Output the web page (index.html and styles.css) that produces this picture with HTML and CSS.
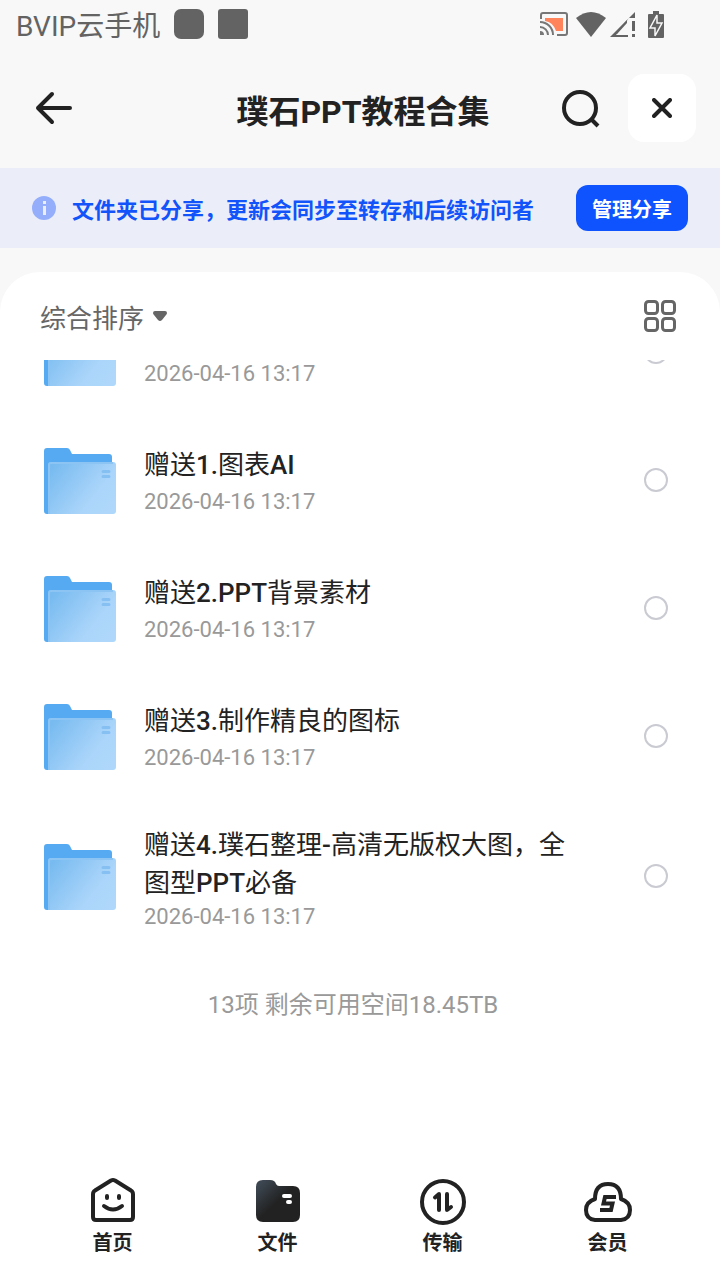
FILE: index.html
```
<!DOCTYPE html>
<html lang="zh-CN">
<head>
    <meta charset="UTF-8">
    <meta name="viewport" content="width=device-width, initial-scale=1.0">
    <title>璞石PPT教程合集</title>
    <link rel="stylesheet" href="styles.css">
</head>
<body>
    <!-- Shared folder icon -->
    <svg class="sprite" width="0" height="0" aria-hidden="true">
        <defs>
            <linearGradient id="folder-front" x1="0" y1="0.2" x2="1" y2="0.8">
                <stop offset="0" stop-color="#78bbf0"/>
                <stop offset="0.7" stop-color="#abd5fa"/>
                <stop offset="1" stop-color="#aed7fb"/>
            </linearGradient>
        </defs>
        <symbol id="folder" viewBox="0 0 72 66">
            <path d="M3 0h20q2 0 3 2l2 4h37q3 0 3 3v50H6v7H3q-3 0-3-3V3q0-3 3-3z" fill="#56aaf1"/>
            <path d="M7 14h62q3 0 3 3v46q0 3-3 3H4V17q0-3 3-3z" fill="url(#folder-front)"/>
            <path d="M5 66V17q0-2 2-2h62" fill="none" stroke="#8cc5f4" stroke-width="2"/>
            <path d="M59 23.500h6M59 28.500h6" stroke="#86c0f2" stroke-width="3" stroke-linecap="round"/>
        </symbol>
    </svg>

    <div class="status-bar">
        <span>BVIP云手机</span>
        <span class="notice-dot round"></span>
        <span class="notice-dot"></span>
        <div class="status-icons">
            <svg width="28" height="24" viewBox="0 0 28 24">
                <path d="M5 6h18v13h-7Q13 10 5 9z" fill="#ff845c"/>
                <path d="M1 7V3q0-2 2-2h22q2 0 2 2v18q0 2-2 2h-8" fill="none" stroke="#777" stroke-width="2"/>
                <path d="M0 10a13 13 0 0 1 13 13M0 15a8 8 0 0 1 8 8" fill="none" stroke="#777" stroke-width="2"/>
                <path d="M0 19a4 4 0 0 1 4 4H0z" fill="#777"/>
            </svg>
            <svg class="wifi" width="30" height="25" viewBox="0 0 30 25">
                <path d="M0 6Q15-6 30 6L15 25z" fill="#636363"/>
            </svg>
            <svg class="signal" width="25" height="25" viewBox="0 0 25 25">
                <path d="M25 0v6h-6L6 23h12v2H0z" fill="#636363"/>
                <path d="M17 8v3L7 22H4z" fill="#636363"/>
                <path d="M22 9h3v10h-3zM22 22h3v3h-3z" fill="#636363"/>
            </svg>
            <svg class="battery" width="16" height="27" viewBox="0 0 16 27">
                <path d="M5 0h6v3h4q1 0 1 1v22q0 1-1 1H1q-1 0-1-1V4q0-1 1-1h4z" fill="#636363"/>
                <path d="M9 4v8h5L7 25v-8H2z" fill="#636363" stroke="#f8f8f8" stroke-width="1.5"/>
            </svg>
        </div>
    </div>

    <header class="header">
        <button type="button" class="back" aria-label="返回">
            <svg width="38" height="34" viewBox="0 0 38 34" fill="none" stroke="#222" stroke-width="4" stroke-linecap="round" stroke-linejoin="round">
                <path d="M18 3L4 17l14 14M4 17h32"/>
            </svg>
        </button>
        <h1>璞石PPT教程合集</h1>
        <div class="header-actions">
            <button type="button" aria-label="搜索">
                <svg width="40" height="40" viewBox="0 0 40 40" fill="none" stroke="#222" stroke-width="4">
                    <circle cx="19" cy="20" r="16"/>
                    <path d="M30 31l7 7"/>
                </svg>
            </button>
            <button type="button" class="close" aria-label="关闭">
                <svg width="20" height="20" viewBox="0 0 20 20" fill="none" stroke="#222" stroke-width="4" stroke-linecap="round">
                    <path d="M2 2l16 16M18 2L2 18"/>
                </svg>
            </button>
        </div>
    </header>

    <div class="share-notice">
        <svg width="24" height="24" viewBox="0 0 24 24">
            <circle cx="12" cy="12" r="12" fill="#94aefc"/>
            <path d="M11 5h3v3h-3zM11 10h3v9h-3z" fill="#ebeef8"/>
        </svg>
        <p>文件夹已分享，更新会同步至转存和后续访问者</p>
        <button type="button">管理分享</button>
    </div>

    <main class="sheet">
        <div class="toolbar">
            <button type="button" class="sort">
                综合排序
                <svg width="14" height="10" viewBox="0 0 14 10">
                    <path d="M2 0h10q2 0 2 2 0 1-1 2L9 9Q7 11 5 9L1 4Q0 3 0 2q0-2 2-2z" fill="#666"/>
                </svg>
            </button>
            <button type="button" aria-label="网格视图">
                <svg width="32" height="32" viewBox="0 0 32 32" fill="none" stroke="#666" stroke-width="3">
                    <rect x="1.5" y="1.5" width="12" height="12" rx="3"/>
                    <rect x="18.5" y="1.5" width="12" height="12" rx="3"/>
                    <rect x="1.5" y="18.5" width="12" height="12" rx="3"/>
                    <rect x="18.5" y="18.5" width="12" height="12" rx="3"/>
                </svg>
            </button>
        </div>

        <div class="list-wrap">
            <ul class="file-list">
                <li class="file">
                    <svg class="folder"><use href="#folder"/></svg>
                    <div class="info">
                        <span class="name"></span>
                        <time>2026-04-16 13:17</time>
                    </div>
                    <input type="checkbox" aria-label="选择文件夹">
                </li>
                <li class="file">
                    <svg class="folder"><use href="#folder"/></svg>
                    <div class="info">
                        <label class="name" for="file1">赠送<b>1.</b>图表<b>AI</b></label>
                        <time>2026-04-16 13:17</time>
                    </div>
                    <input type="checkbox" id="file1">
                </li>
                <li class="file">
                    <svg class="folder"><use href="#folder"/></svg>
                    <div class="info">
                        <label class="name" for="file2">赠送<b>2.PPT</b>背景素材</label>
                        <time>2026-04-16 13:17</time>
                    </div>
                    <input type="checkbox" id="file2">
                </li>
                <li class="file">
                    <svg class="folder"><use href="#folder"/></svg>
                    <div class="info">
                        <label class="name" for="file3">赠送<b>3.</b>制作精良的图标</label>
                        <time>2026-04-16 13:17</time>
                    </div>
                    <input type="checkbox" id="file3">
                </li>
                <li class="file two-lines">
                    <svg class="folder"><use href="#folder"/></svg>
                    <div class="info">
                        <label class="name" for="file4">赠送<b>4.</b>璞石整理<b>-</b>高清无版权大图，全图型<b>PPT</b>必备</label>
                        <time>2026-04-16 13:17</time>
                    </div>
                    <input type="checkbox" id="file4">
                </li>
            </ul>
            <p class="summary">13项 剩余可用空间18.45TB</p>
        </div>
    </main>

    <nav class="tab-bar">
        <a href="#home">
            <svg width="48" height="48" viewBox="0 0 48 48" fill="none" stroke="#222" stroke-width="4" stroke-linecap="round" stroke-linejoin="round">
                <path d="M22 3.500q2-1 4 0l16 10q2 1 2 4V40q0 3-3 3H7q-3 0-3-3V17.500q0-3 2-4z"/>
                <path d="M18 19v2M30 19v2"/>
                <path d="M15 29q9 7 18 0"/>
            </svg>
            首页
        </a>
        <a href="#files">
            <svg width="48" height="48" viewBox="0 0 48 48">
                <defs>
                    <linearGradient id="tab-folder" x1="0" y1="0" x2="1" y2="1">
                        <stop offset="0.1" stop-color="#3c4650"/>
                        <stop offset="0.5" stop-color="#222"/>
                    </linearGradient>
                </defs>
                <path d="M9 3h7q5 0 6 4 1 2 3 2h14q7 0 7 7v22q0 7-7 7H9q-7 0-7-7V10q0-7 7-7z" fill="url(#tab-folder)"/>
                <path d="M30 19h6M34 25h2" stroke="#fff" stroke-width="4" stroke-linecap="round"/>
            </svg>
            文件
        </a>
        <a href="#transfer">
            <svg width="48" height="48" viewBox="0 0 48 48" fill="none" stroke="#222" stroke-width="4" stroke-linecap="round" stroke-linejoin="round">
                <circle cx="24" cy="25" r="21"/>
                <path d="M20 33V17l-4 3.500M28 17v16l4-3"/>
            </svg>
            传输
        </a>
        <a href="#member">
            <svg width="48" height="48" viewBox="0 0 48 48" fill="none" stroke="#222" stroke-width="4">
                <path d="M11 43Q2 42 2 33q0-8 9-11 0-15 13-15t13 15q9 3 9 11 0 9-9 10z" stroke-linejoin="round"/>
                <path d="M32 20H21l-1.500 6.500h9L27 33H16"/>
            </svg>
            会员
        </a>
    </nav>
</body>
</html>
```
FILE: styles.css
```
* {
    box-sizing: border-box;
}

body {
    font-family: Roboto, "Noto Sans CJK SC", sans-serif;
    background: #f8f8f8;
    color: #222;
    display: flex;
    flex-direction: column;
    min-height: 100vh;
    margin: 0;
}

h1, p, ul {
    margin: 0;
    padding: 0;
}

svg {
    display: block;
    flex-shrink: 0;
}

button {
    background: none;
    border: none;
    padding: 0;
    color: inherit;
    font-family: inherit;
    cursor: pointer;
}

.sprite {
    position: absolute;
}

/* Status bar */
.status-bar {
    display: flex;
    align-items: center;
    height: 48px;
    padding: 0 56px 0 16px;
    color: #636363;
    font-size: 28px;
}

.notice-dot {
    width: 30px;
    height: 30px;
    margin-left: 14px;
    border-radius: 3px;
    background: #636363;
}

.notice-dot.round {
    border-radius: 7px;
}

.status-icons {
    display: flex;
    align-items: center;
    margin-left: auto;
}

.wifi {
    margin-left: 8px;
}

.signal {
    margin-left: 4px;
}

.battery {
    margin-left: 13px;
}

/* Header */
.header {
    display: grid;
    grid-template-columns: 1fr auto 1fr;
    align-items: center;
    height: 120px;
    padding: 0 24px 0 34px;
}

.header h1 {
    padding: 8px 4px 0 0;
    font-size: 32px;
    line-height: 48px;
    font-weight: 700;
}

.back {
    justify-self: start;
}

.header-actions {
    display: flex;
    align-items: center;
    justify-content: flex-end;
    gap: 27px;
}

.close {
    display: flex;
    align-items: center;
    justify-content: center;
    width: 68px;
    height: 68px;
    border-radius: 16px;
    background: #fff;
}

/* Share notice */
.share-notice {
    display: flex;
    align-items: center;
    height: 80px;
    padding: 0 32px;
    gap: 16px;
    background: #ebeef8;
}

.share-notice p {
    flex: 1;
    color: #1253fa;
    font-size: 22px;
    font-weight: 700;
}

.share-notice button {
    height: 46px;
    padding: 0 16px;
    border-radius: 12px;
    background: #0f53ff;
    color: #fff;
    font-size: 20px;
    font-weight: 700;
}

/* File list */
.sheet {
    flex: 1;
    display: flex;
    flex-direction: column;
    margin-top: 24px;
    border-radius: 40px 40px 0 0;
    background: #fff;
}

.toolbar {
    display: flex;
    align-items: center;
    justify-content: space-between;
    height: 88px;
    padding: 0 44px 0 40px;
}

.sort {
    display: flex;
    align-items: center;
    gap: 9px;
    color: #666;
    font-size: 26px;
}

.list-wrap {
    flex: 1;
    overflow: hidden;
}

.file-list {
    list-style: none;
    margin-top: -72px; /* list is scrolled past the first row's title */
}

.file {
    display: flex;
    align-items: center;
    min-height: 128px;
    padding: 20px 52px 20px 44px;
}

.folder {
    width: 72px;
    height: 66px;
    margin-top: 2px;
}

.info {
    flex: 1;
    display: flex;
    flex-direction: column;
    margin: 0 76px 0 28px;
    padding-top: 6px;
}

.name {
    min-height: 38px;
    font-size: 26px;
    line-height: 38px;
}

.name b {
    font-weight: 500;
}

.info time {
    color: #999;
    font-size: 22px;
    line-height: 36px;
}

.two-lines time {
    line-height: 30px;
}

.file input {
    appearance: none;
    width: 24px;
    height: 24px;
    margin: 0;
    border: 2px solid #cacbd2;
    border-radius: 50%;
}

.file input:checked {
    border-color: #0f53ff;
    background: #0f53ff;
}

.summary {
    padding: 33px 14px 32px 0;
    color: #999;
    font-size: 24px;
    line-height: 40px;
    text-align: center;
}

/* Bottom tabs */
.tab-bar {
    display: flex;
    height: 120px;
    padding: 17px 30px 0;
    background: #fff;
}

.tab-bar a {
    flex: 1;
    display: flex;
    flex-direction: column;
    align-items: center;
    gap: 4px;
    color: #222;
    font-size: 20px;
    line-height: 28px;
    font-weight: 700;
    text-decoration: none;
}
```
